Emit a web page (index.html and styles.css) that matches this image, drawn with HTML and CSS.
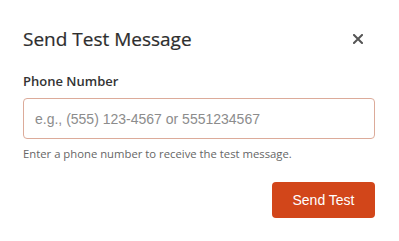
FILE: index.html
```html
<!DOCTYPE html>
<html lang="en">
<head>
<meta charset="utf-8">
<title>Send Test Message</title>
<link rel="stylesheet" href="styles.css">
</head>
<body>
<div class="dialog">
  <div class="header">
    <h2 class="title">Send Test Message</h2>
    <button class="close" aria-label="Close">
      <svg width="10" height="10" viewBox="0 0 10 10"><path d="M1 1 L9 9 M9 1 L1 9" stroke="#555" stroke-width="2" stroke-linecap="square" fill="none"/></svg>
    </button>
  </div>
  <label class="label" for="phone">Phone Number</label>
  <input id="phone" class="input" type="text" placeholder="e.g., (555) 123-4567 or 5551234567">
  <p class="help">Enter a phone number to receive the test message.</p>
  <div class="actions">
    <button class="send">Send Test</button>
  </div>
</div>
</body>
</html>
```

FILE: styles.css
```css
html, body {
  margin: 0;
  padding: 0;
  background: #ffffff;
}
.dialog {
  width: 399px;
  box-sizing: border-box;
  padding: 0 24px 0 23px;
  font-family: "Open Sans", "Noto Sans", sans-serif;
  display: flex;
  flex-direction: column;
}
.header {
  margin-top: 26px;
  display: flex;
  align-items: center;
  justify-content: space-between;
  height: 26px;
}
.title {
  margin: 0;
  font-size: 19px;
  line-height: 26px;
  font-weight: 500;
  color: #2e2e2e;
  -webkit-text-stroke: 0.2px #2e2e2e;
}
.close {
  width: 20px;
  height: 20px;
  margin-right: 7px;
  padding: 0;
  border: none;
  background: transparent;
  display: flex;
  align-items: center;
  justify-content: center;
}
.label {
  margin-top: 20px;
  font-size: 13px;
  line-height: 18px;
  font-weight: 600;
  color: #333333;
}
.input {
  margin-top: 8px;
  height: 41px;
  box-sizing: border-box;
  border: 1px solid #dcab9a;
  border-radius: 4px;
  padding: 0 11px;
  font-family: "Liberation Sans", Arial, sans-serif;
  font-size: 14px;
  outline: none;
}
.input::placeholder {
  color: #8c8c8c;
}
.help {
  margin: 7px 0 0;
  font-size: 11.3px;
  line-height: 15px;
  color: #666666;
}
.actions {
  margin-top: 21px;
  display: flex;
  justify-content: flex-end;
}
.send {
  width: 103px;
  height: 36px;
  border: none;
  border-radius: 4px;
  background: #d2461a;
  color: #ffffff;
  font-family: "Liberation Sans", Arial, sans-serif;
  font-size: 14px;
  padding: 0;
}
```
